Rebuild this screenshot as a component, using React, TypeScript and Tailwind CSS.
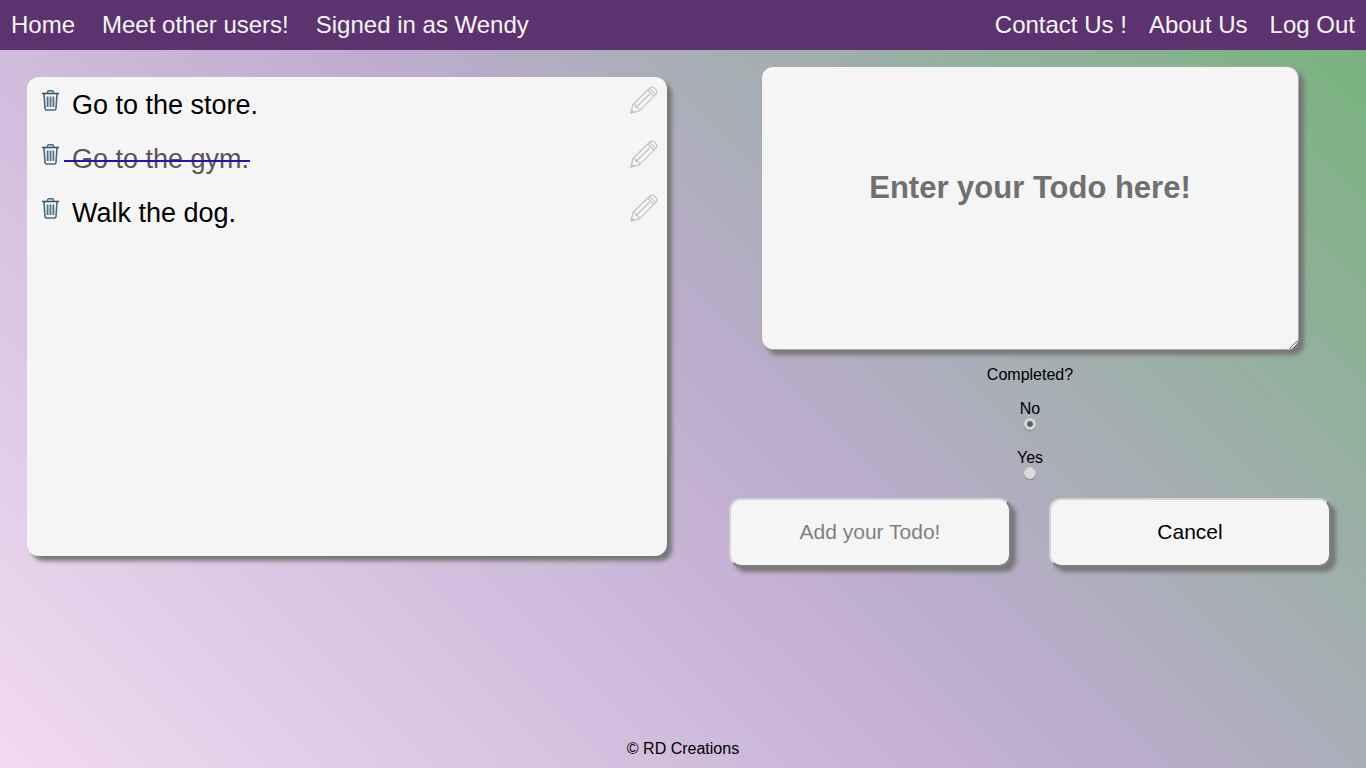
import { useState } from "react";

type Todo = { id: number; text: string; done: boolean };

const todos: Todo[] = [
  { id: 1, text: "Go to the store.", done: false },
  { id: 2, text: "Go to the gym.", done: true },
  { id: 3, text: "Walk the dog.", done: false },
];

function TrashIcon() {
  return (
    <svg width="17" height="21" viewBox="0 0 17 21" fill="none" aria-hidden="true">
      <path d="M0 3.500h17" stroke="#2f566d" strokeWidth="1.600" />
      <path d="M5.500 3.200V2.200Q5.500.8 6.900.8h3.200q1.400 0 1.400 1.400v1" stroke="#47697e" strokeWidth="1.400" />
      <path d="M2 4l1 14.500q.2 1.500 1.500 1.500h8q1.300 0 1.500-1.500L15 4" stroke="#45687e" strokeWidth="1.600" />
      <path d="M5.600 6.500v10.500M8.500 6.500v10.500M11.400 6.500v10.500" stroke="#527287" strokeWidth="1.800" />
    </svg>
  );
}

function PencilIcon() {
  return (
    <svg width="28" height="28" viewBox="0 0 28 28" fill="none" stroke="#c4c4c4" strokeWidth="1.200" aria-hidden="true">
      <path d="M1 27l2-8.500L20 1.800q2.600-2 5.200.8t1 5.200L9.500 24.800z" strokeLinejoin="round" />
      <path d="M3 18.500q3 0 3 3 3.200 0 3.500 3.300M6 21.500L20 7.700" />
      <path d="M17.700 4l6.300 6.300M19.500 2.300l6.300 6.300" />
      <path d="M1 27l.7-3 2.300 2.300z" fill="#c4c4c4" />
    </svg>
  );
}

function NavLink({ children }: { children: string }) {
  return (
    <a href="#" className="text-[#f5f5f5]">
      {children}
    </a>
  );
}

function TodoRow({ todo }: { todo: Todo }) {
  return (
    <li className="flex h-[54px] items-start pr-[9px] pl-[15px]">
      <button type="button" aria-label={`Delete ${todo.text}`} className="mt-[13px] shrink-0">
        <TrashIcon />
      </button>
      <span
        className={
          todo.done
            ? "relative ml-[13px] mt-[12px] leading-[32px] text-[#5d5457] after:absolute after:-left-2 after:-right-px after:top-[17px] after:h-[2px] after:bg-[#2a12b0]"
            : "ml-[13px] mt-[12px] leading-[32px] text-black"
        }
      >
        {todo.text}
      </span>
      <button type="button" aria-label={`Edit ${todo.text}`} className="mt-[9px] ml-auto shrink-0">
        <PencilIcon />
      </button>
    </li>
  );
}

type RadioProps = { label: string; checked: boolean; onSelect: () => void };

function CompletedRadio({ label, checked, onSelect }: RadioProps) {
  return (
    <label className="flex flex-col items-center leading-[18px]">
      {label}
      <input
        type="radio"
        name="completed"
        checked={checked}
        onChange={onSelect}
        className="h-3 w-3 appearance-none rounded-full border border-[#d2d2d2] bg-[#dadada] shadow-[0_1px_1px_#858585] checked:bg-[radial-gradient(circle,#5c5c5c_0_2px,#e2e2e2_4px)]"
      />
    </label>
  );
}

const actionButton =
  "h-[69px] flex-1 rounded-xl border-2 border-t-[#d3d3d3] border-l-[#d3d3d3] border-r-[#808080] border-b-[#808080] bg-[#f5f5f5] pb-[2px] text-[21px] shadow-[5px_5px_4px_#777]";

export default function App() {
  const [text, setText] = useState("");
  const [completed, setCompleted] = useState("no");

  return (
    <div className="flex min-h-screen flex-col bg-[linear-gradient(45deg,#f2daf2,#beaccf_51%,#75b37a)] font-['Liberation_Sans',Arial,sans-serif] text-base text-black">
      <nav className="flex h-[50px] items-center justify-between bg-[#5c336e] px-[11px] text-2xl">
        <div className="flex gap-[27px]">
          <NavLink>Home</NavLink>
          <NavLink>Meet other users!</NavLink>
          <span className="text-[#f5f5f5]">Signed in as Wendy</span>
        </div>
        <div className="flex gap-[22px]">
          <NavLink>Contact Us !</NavLink>
          <NavLink>About Us</NavLink>
          <NavLink>Log Out</NavLink>
        </div>
      </nav>

      <main className="grid flex-1 grid-cols-[320fr_301fr] items-start gap-[62px] pr-[35px] pl-[27px]">
        <ul className="mt-[27px] min-h-[479px] rounded-xl bg-[#f5f5f5] text-[27px] shadow-[5px_5px_4px_#777]">
          {todos.map((todo) => (
            <TodoRow key={todo.id} todo={todo} />
          ))}
        </ul>

        <form className="mt-4 flex flex-col items-center" onSubmit={(e) => e.preventDefault()}>
          <textarea
            aria-label="Todo"
            placeholder="Enter your Todo here!"
            value={text}
            onChange={(e) => setText(e.target.value)}
            className="h-[284px] w-[538px] max-w-full rounded-xl border border-[#a9a9a9] bg-[#f5f5f5] px-2 pt-[102px] text-center text-[31px] leading-[37px] font-bold shadow-[5px_5px_4px_#777] placeholder:text-[#707070]"
          />
          <fieldset className="mt-4 flex flex-col items-center">
            <legend className="mx-auto mb-4 leading-[18px]">Completed?</legend>
            <div className="flex flex-col gap-[19px]">
              <CompletedRadio label="No" checked={completed === "no"} onSelect={() => setCompleted("no")} />
              <CompletedRadio label="Yes" checked={completed === "yes"} onSelect={() => setCompleted("yes")} />
            </div>
          </fieldset>
          <div className="mt-[19px] flex w-full gap-[38px]">
            <button type="submit" disabled className={`${actionButton} text-[#808080]`}>
              Add your Todo!
            </button>
            <button type="button" className={`${actionButton} text-black`}>
              Cancel
            </button>
          </div>
        </form>
      </main>

      <footer className="pb-[10px] text-center leading-[18px]">© RD Creations</footer>
    </div>
  );
}
